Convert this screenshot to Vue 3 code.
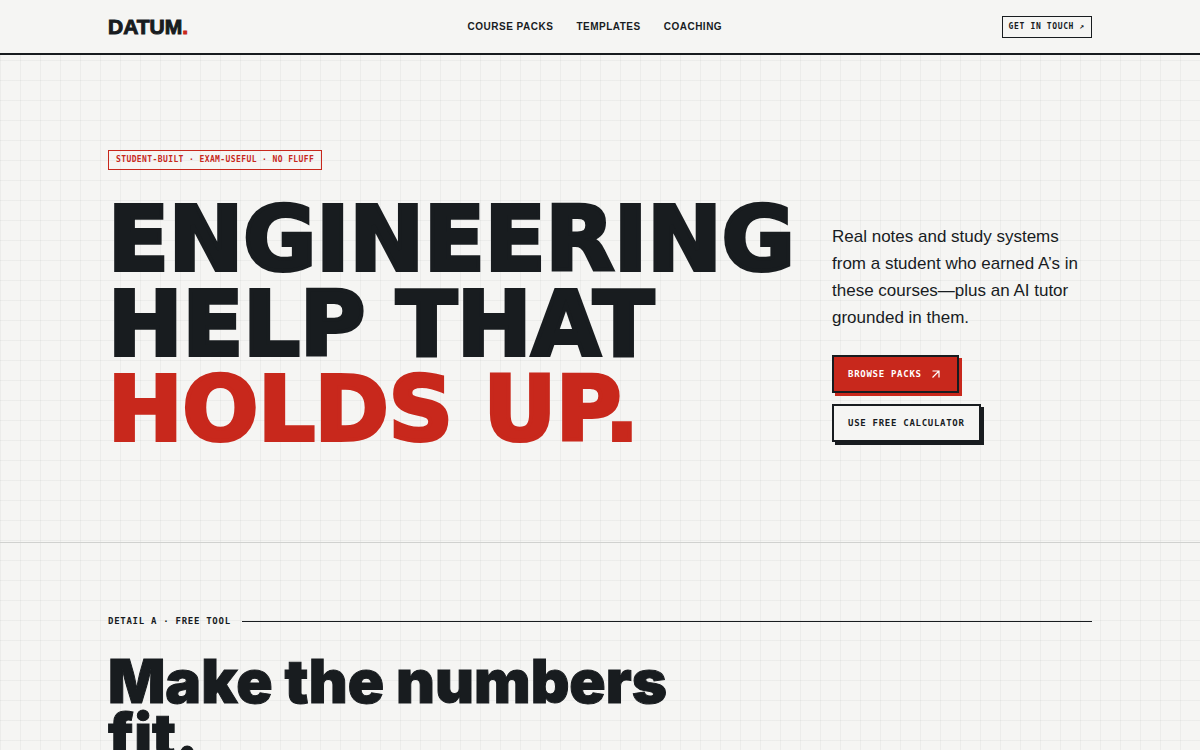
<script setup>
const navLinks = ['Course packs', 'Templates', 'Coaching']
</script>

<template>
  <div class="page">
    <header class="topbar">
      <div class="wrap topbar-inner">
        <a class="logo" href="#">DATUM<span class="accent">.</span></a>
        <nav class="nav" aria-label="Main">
          <a v-for="link in navLinks" :key="link" href="#">{{ link }}</a>
        </nav>
        <a class="contact" href="#">Get in touch ↗</a>
      </div>
    </header>

    <main>
      <section class="hero">
        <div class="wrap">
          <p class="tag">Student-built · Exam-useful · No fluff</p>
          <div class="hero-grid">
            <h1>Engineering<br />help that<br /><span class="accent">holds up.</span></h1>
            <div class="intro">
              <p>Real notes and study systems from a student who earned A’s in these courses—plus an AI tutor grounded in them.</p>
              <div class="actions">
                <a class="btn primary" href="#">
                  Browse packs
                  <svg viewBox="0 0 14 14" width="14" height="14" aria-hidden="true">
                    <path d="M3.5 4H10V10.5M10 4L3.5 10.5" fill="none" stroke="currentColor" stroke-width="1.2" />
                  </svg>
                </a>
                <a class="btn" href="#">Use free calculator</a>
              </div>
            </div>
          </div>
        </div>
      </section>

      <section class="tool">
        <div class="wrap">
          <p class="detail">Detail A · Free tool</p>
          <h2>Make the numbers fit.</h2>
        </div>
      </section>
    </main>
  </div>
</template>

<style>
body {
  background: #f5f5f3;
  overflow: hidden;
}
</style>

<style scoped>
.page {
  --ink: #181c1f;
  --red: #c8281c;
  --paper: #f5f5f3;
  --mono: "DejaVu Sans Mono", "Liberation Mono", monospace;
  height: 100vh;
  overflow: hidden;
  color: var(--ink);
  font-family: "Liberation Sans", Arial, sans-serif;
  background-color: var(--paper);
  background-image:
    linear-gradient(to right, rgba(24, 28, 31, 0.04) 1px, transparent 1px),
    linear-gradient(to bottom, rgba(24, 28, 31, 0.04) 1px, transparent 1px);
  background-size: 20px 20px;
}

a {
  color: inherit;
  text-decoration: none;
}

.wrap {
  max-width: 984px;
  margin: 0 auto;
  padding: 0 24px;
}

.accent {
  color: var(--red);
}

.topbar {
  background: var(--paper);
  border-bottom: 2px solid var(--ink);
}

.topbar-inner {
  display: flex;
  justify-content: space-between;
  align-items: center;
  min-height: 53px;
}

.logo {
  font-size: 21px;
  font-weight: 700;
  line-height: 24px;
  -webkit-text-stroke: 1px currentColor;
}

.nav {
  display: flex;
  gap: 23px;
  font-size: 10px;
  font-weight: 700;
  letter-spacing: 0.05em;
  text-transform: uppercase;
}

.contact {
  padding: 5px 6px;
  border: 1px solid var(--ink);
  font: 700 8px/10px var(--mono);
  letter-spacing: 0.08em;
  text-transform: uppercase;
}

.hero {
  padding: 95px 0 90px;
  border-bottom: 1px solid #d0d1cf;
}

.tag {
  width: fit-content;
  margin: 0 0 27px;
  padding: 4px 7px;
  border: 1px solid var(--red);
  color: var(--red);
  font: 700 8px/10px var(--mono);
  letter-spacing: 0.05em;
  text-transform: uppercase;
}

.hero-grid {
  display: grid;
  grid-template-columns: 1fr 260px;
  gap: 24px;
  align-items: end;
}

h1 {
  margin: 0;
  font-family: "DejaVu Sans", sans-serif;
  font-size: 89px;
  font-weight: 700;
  line-height: 85px;
  -webkit-text-stroke: 4px currentColor;
  text-transform: uppercase;
  white-space: nowrap;
}

.intro {
  padding-bottom: 10px;
}

.intro p {
  margin: 0 0 24px;
  font-size: 17px;
  line-height: 27px;
}

.actions {
  display: flex;
  flex-direction: column;
  align-items: flex-start;
  gap: 11px;
}

.btn {
  display: flex;
  align-items: center;
  gap: 7px;
  padding: 10px 14px;
  border: 2px solid var(--ink);
  background: var(--paper);
  box-shadow: 3px 3px 0 var(--ink);
  font: 700 9px/14px var(--mono);
  letter-spacing: 0.08em;
  text-transform: uppercase;
}

.primary {
  background: var(--red);
  color: #fff;
  box-shadow: 3px 3px 0 var(--red);
}

.tool {
  padding-top: 72px;
}

.detail {
  display: flex;
  align-items: center;
  gap: 11px;
  margin: 0 0 27px;
  font: 700 9px/12px var(--mono);
  letter-spacing: 0.08em;
  text-transform: uppercase;
}

.detail::after {
  content: "";
  flex: 1;
  height: 1px;
  background: var(--ink);
}

h2 {
  max-width: 600px;
  margin: 0;
  font-family: Inter, sans-serif;
  font-size: 60px;
  font-weight: 900;
  line-height: 54px;
  -webkit-text-stroke: 1px currentColor;
}
</style>
